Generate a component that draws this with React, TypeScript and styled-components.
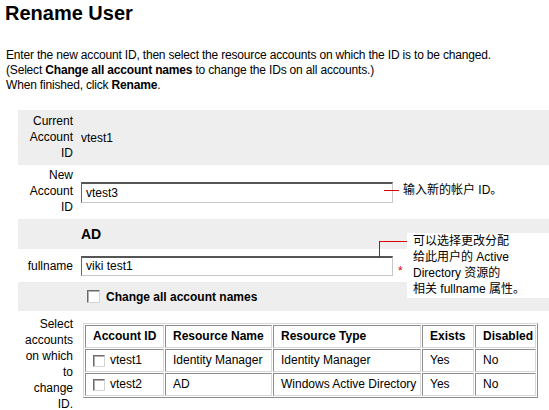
import React from 'react';
import styled, { createGlobalStyle } from 'styled-components';

const GlobalStyle = createGlobalStyle`
  html, body {
    margin: 0;
    padding: 0;
    overflow: hidden;
    background: #fff;
  }
  body {
    font-family: "Liberation Sans", Arial, "Noto Sans CJK SC", sans-serif;
    font-size: 12px;
    color: #000;
  }
`;

const Page = styled.div`
  width: 549px;
  height: 410px;
`;

const Title = styled.h1`
  margin: 0;
  padding: 2px 0 0 5px;
  font-size: 20px;
  line-height: 23px;
  font-weight: bold;
`;

const Intro = styled.p`
  margin: 23px 0 0;
  padding-left: 6px;
  line-height: 15px;
  letter-spacing: -0.18px;
`;

const Form = styled.div`
  position: relative;
  margin: 17px 0 0 18px;
`;

const Row = styled.div<{ $shaded?: boolean; $height?: number; $top?: boolean }>`
  display: flex;
  align-items: ${p => (p.$top ? 'flex-start' : 'center')};
  background: ${p => (p.$shaded ? '#eeeeee' : '#fff')};
  height: ${p => (p.$height ? `${p.$height}px` : 'auto')};
`;

const Label = styled.div<{ $pad?: string }>`
  box-sizing: border-box;
  width: 58px;
  flex: none;
  padding: ${p => p.$pad || '0 3px 0 0'};
  text-align: right;
  line-height: 16px;
`;

const Value = styled.div`
  flex: 1;
  display: flex;
  align-items: center;
  padding-left: 5px;
`;

const Section = styled.div`
  font-size: 14px;
  font-weight: bold;
`;

const TextField = styled.input`
  box-sizing: border-box;
  width: 312px;
  height: ${p => (p.height ? `${p.height}px` : '21px')};
  padding: 0 4px;
  font-family: inherit;
  font-size: 12px;
  color: #000;
  background: #fff;
  border-style: solid;
  border-width: 2px 1px 1px 1px;
  border-color: #555 #c8c8c8 #c8c8c8 #666;
  outline: none;
`;

const Required = styled.span`
  color: #e00000;
  margin-left: 5px;
  align-self: flex-start;
  margin-top: 10px;
  line-height: 12px;
`;

const Check = styled.input.attrs({ type: 'checkbox' })<{ $size?: number }>`
  appearance: none;
  box-sizing: border-box;
  margin: 0;
  width: ${p => p.$size || 12}px;
  height: ${p => p.$size || 12}px;
  flex: none;
  background: #fff;
  border: 1px solid;
  border-color: #6b6b6b #d4d4d4 #d4d4d4 #6b6b6b;
  box-shadow: inset 1px 1px 0 #b0b0b0;
  vertical-align: middle;
`;

const CheckLabel = styled.label`
  display: flex;
  align-items: center;
  gap: 6px;
  margin-left: 6px;
  font-weight: bold;
`;

const AccountTable = styled.table`
  margin: 12px 0 0 2px;
  width: 455px;
  table-layout: fixed;
  border-collapse: separate;
  border-spacing: 1px;
  border: 1px solid;
  border-color: #d8d8d8 #8e8e8e #8e8e8e #d8d8d8;
`;

const Cell = styled.td<{ $head?: boolean }>`
  box-sizing: border-box;
  padding: 0 7px;
  line-height: 21px;
  text-align: left;
  white-space: nowrap;
  font-weight: ${p => (p.$head ? 'bold' : 'normal')};
  border: 1px solid;
  border-color: #8e8e8e #d8d8d8 #d8d8d8 #8e8e8e;
`;

const AccountCell = styled.span`
  display: flex;
  align-items: center;
  gap: 5px;
`;

const Callout = styled.div<{ $top: number; $left: number }>`
  position: absolute;
  top: ${p => p.$top}px;
  left: ${p => p.$left}px;
  right: 0;
  display: flex;
  align-items: flex-start;
  line-height: 16px;
`;

const Leader = styled.div`
  width: 15px;
  height: 1px;
  margin-top: 8px;
  background: #e00000;
`;

const Elbow = styled.div`
  box-sizing: border-box;
  width: 28px;
  height: 17px;
  margin-top: 8px;
  border-top: 1px solid #e00000;
  border-left: 1px solid #e00000;
`;

const Note = styled.div<{ $boxed?: boolean }>`
  flex: ${p => (p.$boxed ? 1 : 'none')};
  padding-left: ${p => (p.$boxed ? '6px' : '4px')};
  padding-bottom: ${p => (p.$boxed ? '1px' : '0')};
  background: ${p => (p.$boxed ? '#fff' : 'transparent')};
`;

const columns = [
  { title: 'Account ID', width: 79 },
  { title: 'Resource Name', width: 107 },
  { title: 'Resource Type', width: 148 },
  { title: 'Exists', width: 52 },
  { title: 'Disabled', width: 61 },
];

const accounts = [
  { id: 'vtest1', name: 'Identity Manager', type: 'Identity Manager', exists: 'Yes', disabled: 'No' },
  { id: 'vtest2', name: 'AD', type: 'Windows Active Directory', exists: 'Yes', disabled: 'No' },
];

export default function App() {
  return (
    <Page>
      <GlobalStyle />
      <Title>Rename User</Title>
      <Intro>
        Enter the new account ID, then select the resource accounts on which the ID is to be changed.
        <br />
        (Select <b>Change all account names</b> to change the IDs on all accounts.)
        <br />
        When finished, click <b>Rename</b>.
      </Intro>

      <Form>
        <Row $shaded>
          <Label $pad="3px 3px 4px 0">
            Current<br />Account<br />ID
          </Label>
          <Value>vtest1</Value>
        </Row>

        <Row>
          <Label $pad="2px 3px 4px 0">
            New<br />Account<br />ID
          </Label>
          <Value>
            <TextField defaultValue="vtest3" />
          </Value>
        </Row>

        <Row $shaded $height={30}>
          <Label />
          <Value>
            <Section>AD</Section>
          </Value>
        </Row>

        <Row $height={33}>
          <Label>fullname</Label>
          <Value>
            <TextField defaultValue="viki test1" height={20} />
            <Required>*</Required>
          </Value>
        </Row>

        <Row $shaded $height={29}>
          <Label />
          <Value>
            <CheckLabel>
              <Check $size={13} />
              Change all account names
            </CheckLabel>
          </Value>
        </Row>

        <Row $top>
          <Label $pad="5px 3px 0 0">
            Select<br />accounts<br />on which<br />to<br />change<br />ID.
          </Label>
          <Value>
            <AccountTable>
              <colgroup>
                {columns.map(c => (
                  <col key={c.title} style={{ width: c.width }} />
                ))}
              </colgroup>
              <thead>
                <tr>
                  {columns.map(c => (
                    <Cell as="th" key={c.title} $head>
                      {c.title}
                    </Cell>
                  ))}
                </tr>
              </thead>
              <tbody>
                {accounts.map(a => (
                  <tr key={a.id}>
                    <Cell>
                      <AccountCell>
                        <Check $size={12} />
                        {a.id}
                      </AccountCell>
                    </Cell>
                    <Cell>{a.name}</Cell>
                    <Cell>{a.type}</Cell>
                    <Cell>{a.exists}</Cell>
                    <Cell>{a.disabled}</Cell>
                  </tr>
                ))}
              </tbody>
            </AccountTable>
          </Value>
        </Row>

        <Callout $top={72} $left={366}>
          <Leader />
          <Note>输入新的帐户 ID。</Note>
        </Callout>

        <Callout $top={123} $left={361}>
          <Elbow />
          <Note $boxed>
            可以选择更改分配<br />
            给此用户的 Active<br />
            Directory 资源的<br />
            相关 fullname 属性。
          </Note>
        </Callout>
      </Form>
    </Page>
  );
}
